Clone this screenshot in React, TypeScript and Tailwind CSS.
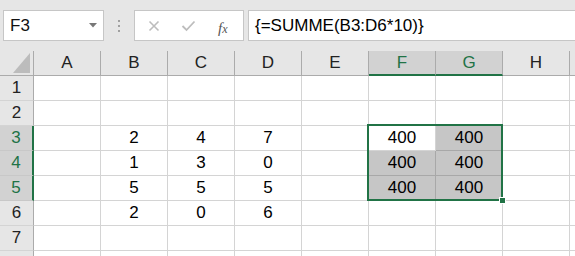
const COLS = ["A", "B", "C", "D", "E", "F", "G", "H"];

const DATA: Record<number, Record<string, string>> = {
  3: { B: "2", C: "4", D: "7", F: "400", G: "400" },
  4: { B: "1", C: "3", D: "0", F: "400", G: "400" },
  5: { B: "5", C: "5", D: "5", F: "400", G: "400" },
  6: { B: "2", C: "0", D: "6" },
};

const SEL_COLS = ["F", "G"];
const SEL_ROWS = [3, 4, 5];

function isShaded(r: number, c: string) {
  if (!SEL_ROWS.includes(r) || !SEL_COLS.includes(c)) return false;
  return !(r === 3 && c === "F");
}

export default function App() {
  const rows = [1, 2, 3, 4, 5, 6, 7, 8];
  return (
    <div
      className="w-[575px] h-[256px] overflow-hidden bg-[#e6e6e6] text-black"
      style={{ fontFamily: '"Liberation Sans", Arial, sans-serif' }}
    >
      {/* formula bar */}
      <div className="h-[51px] flex items-start pt-[10px] pl-[3px] overflow-hidden">
        <div className="w-[101px] h-[31px] shrink-0 bg-white border border-[#c6c6c6] flex items-center justify-between pl-[6px] pr-[6px]">
          <span className="text-[17px] leading-none text-[#111]">F3</span>
          <svg width="8" height="5" viewBox="0 0 8 5">
            <polygon points="0,0 8,0 4,4.5" fill="#777" />
          </svg>
        </div>
        <div className="w-[30px] h-[31px] shrink-0 flex flex-col items-center justify-center gap-[3px]">
          <span className="w-[2px] h-[2px] bg-[#a0a0a0]" />
          <span className="w-[2px] h-[2px] bg-[#a0a0a0]" />
          <span className="w-[2px] h-[2px] bg-[#a0a0a0]" />
        </div>
        <div className="w-[110px] h-[31px] shrink-0 bg-white border border-[#c6c6c6] relative">
          <svg className="absolute left-[13px] top-[9px]" width="12" height="12" viewBox="0 0 12 12">
            <path d="M1.5 1.5 L10.5 10.5 M10.5 1.5 L1.5 10.5" stroke="#bdbdbd" strokeWidth="1.6" fill="none" />
          </svg>
          <svg className="absolute left-[46px] top-[9px]" width="15" height="12" viewBox="0 0 15 12">
            <path d="M1.5 6 L5.5 10 L13.5 1.5" stroke="#bdbdbd" strokeWidth="1.8" fill="none" />
          </svg>
          <span
            className="absolute left-[83px] top-[6px] text-[15px] italic text-[#555]"
            style={{ fontFamily: '"Liberation Serif", "Times New Roman", serif' }}
          >
            f<span className="text-[12px]">x</span>
          </span>
        </div>
        <div className="w-[400px] h-[31px] shrink-0 ml-[4px] bg-white border border-[#c6c6c6] flex items-center pl-[6px]">
          <span className="text-[17px] leading-none">{"{=SUMME(B3:D6*10)}"}</span>
        </div>
      </div>

      {/* sheet */}
      <div className="relative bg-white">
        <div className="grid grid-cols-[34px_repeat(8,67px)_1fr]">
          {/* header row */}
          <div className="h-[25px] bg-[#e6e6e6] border-r border-b border-[#ababab] relative">
            <svg className="absolute left-0 top-0" width="33" height="24" viewBox="0 0 33 24">
              <polygon points="30,2 30,22 13,22" fill="#bcbcbc" />
            </svg>
          </div>
          {COLS.map((c) => {
            const sel = SEL_COLS.includes(c);
            return (
              <div
                key={c}
                className={
                  sel
                    ? "h-[25px] bg-[#d2d2d2] border-r border-[#ababab] border-b-2 border-b-[#217346] flex items-center justify-center text-[17px] text-[#217346] pt-[1px]"
                    : "h-[25px] bg-[#e6e6e6] border-r border-b border-[#ababab] flex items-center justify-center text-[17px] text-[#222]"
                }
              >
                {c}
              </div>
            );
          })}
          <div className="h-[25px] bg-[#e6e6e6] border-b border-[#ababab]" />

          {rows.map((r) => {
            const selRow = SEL_ROWS.includes(r);
            return [
              <div
                key={`h${r}`}
                className={
                  selRow
                    ? "h-[25px] bg-[#d2d2d2] border-r-2 border-r-[#217346] border-b border-b-[#c8c8c8] flex items-center justify-center text-[17px] text-[#217346]"
                    : "h-[25px] bg-[#e6e6e6] border-r border-r-[#ababab] border-b border-b-[#d4d4d4] flex items-center justify-center text-[17px] text-[#222]"
                }
              >
                {r < 8 ? r : ""}
              </div>,
              ...COLS.map((c) => {
                const shaded = isShaded(r, c);
                return (
                  <div
                    key={`${r}${c}`}
                    className={
                      shaded
                        ? "h-[25px] bg-[#c6c6c6] border-r border-b border-[#a8a8a8] flex items-center justify-center text-[17px]"
                        : "h-[25px] bg-white border-r border-b border-[#d4d4d4] flex items-center justify-center text-[17px]"
                    }
                  >
                    {DATA[r]?.[c] ?? ""}
                  </div>
                );
              }),
              <div key={`e${r}`} className="h-[25px] bg-white border-b border-[#d4d4d4]" />,
            ];
          })}
        </div>

        {/* selection outline */}
        <div className="absolute left-[367px] top-[73px] w-[136px] h-[77px] border-2 border-[#217346] pointer-events-none" />
        <div className="absolute left-[499px] top-[146px] w-[7px] h-[7px] bg-[#217346] border border-white pointer-events-none" />
      </div>
    </div>
  );
}
